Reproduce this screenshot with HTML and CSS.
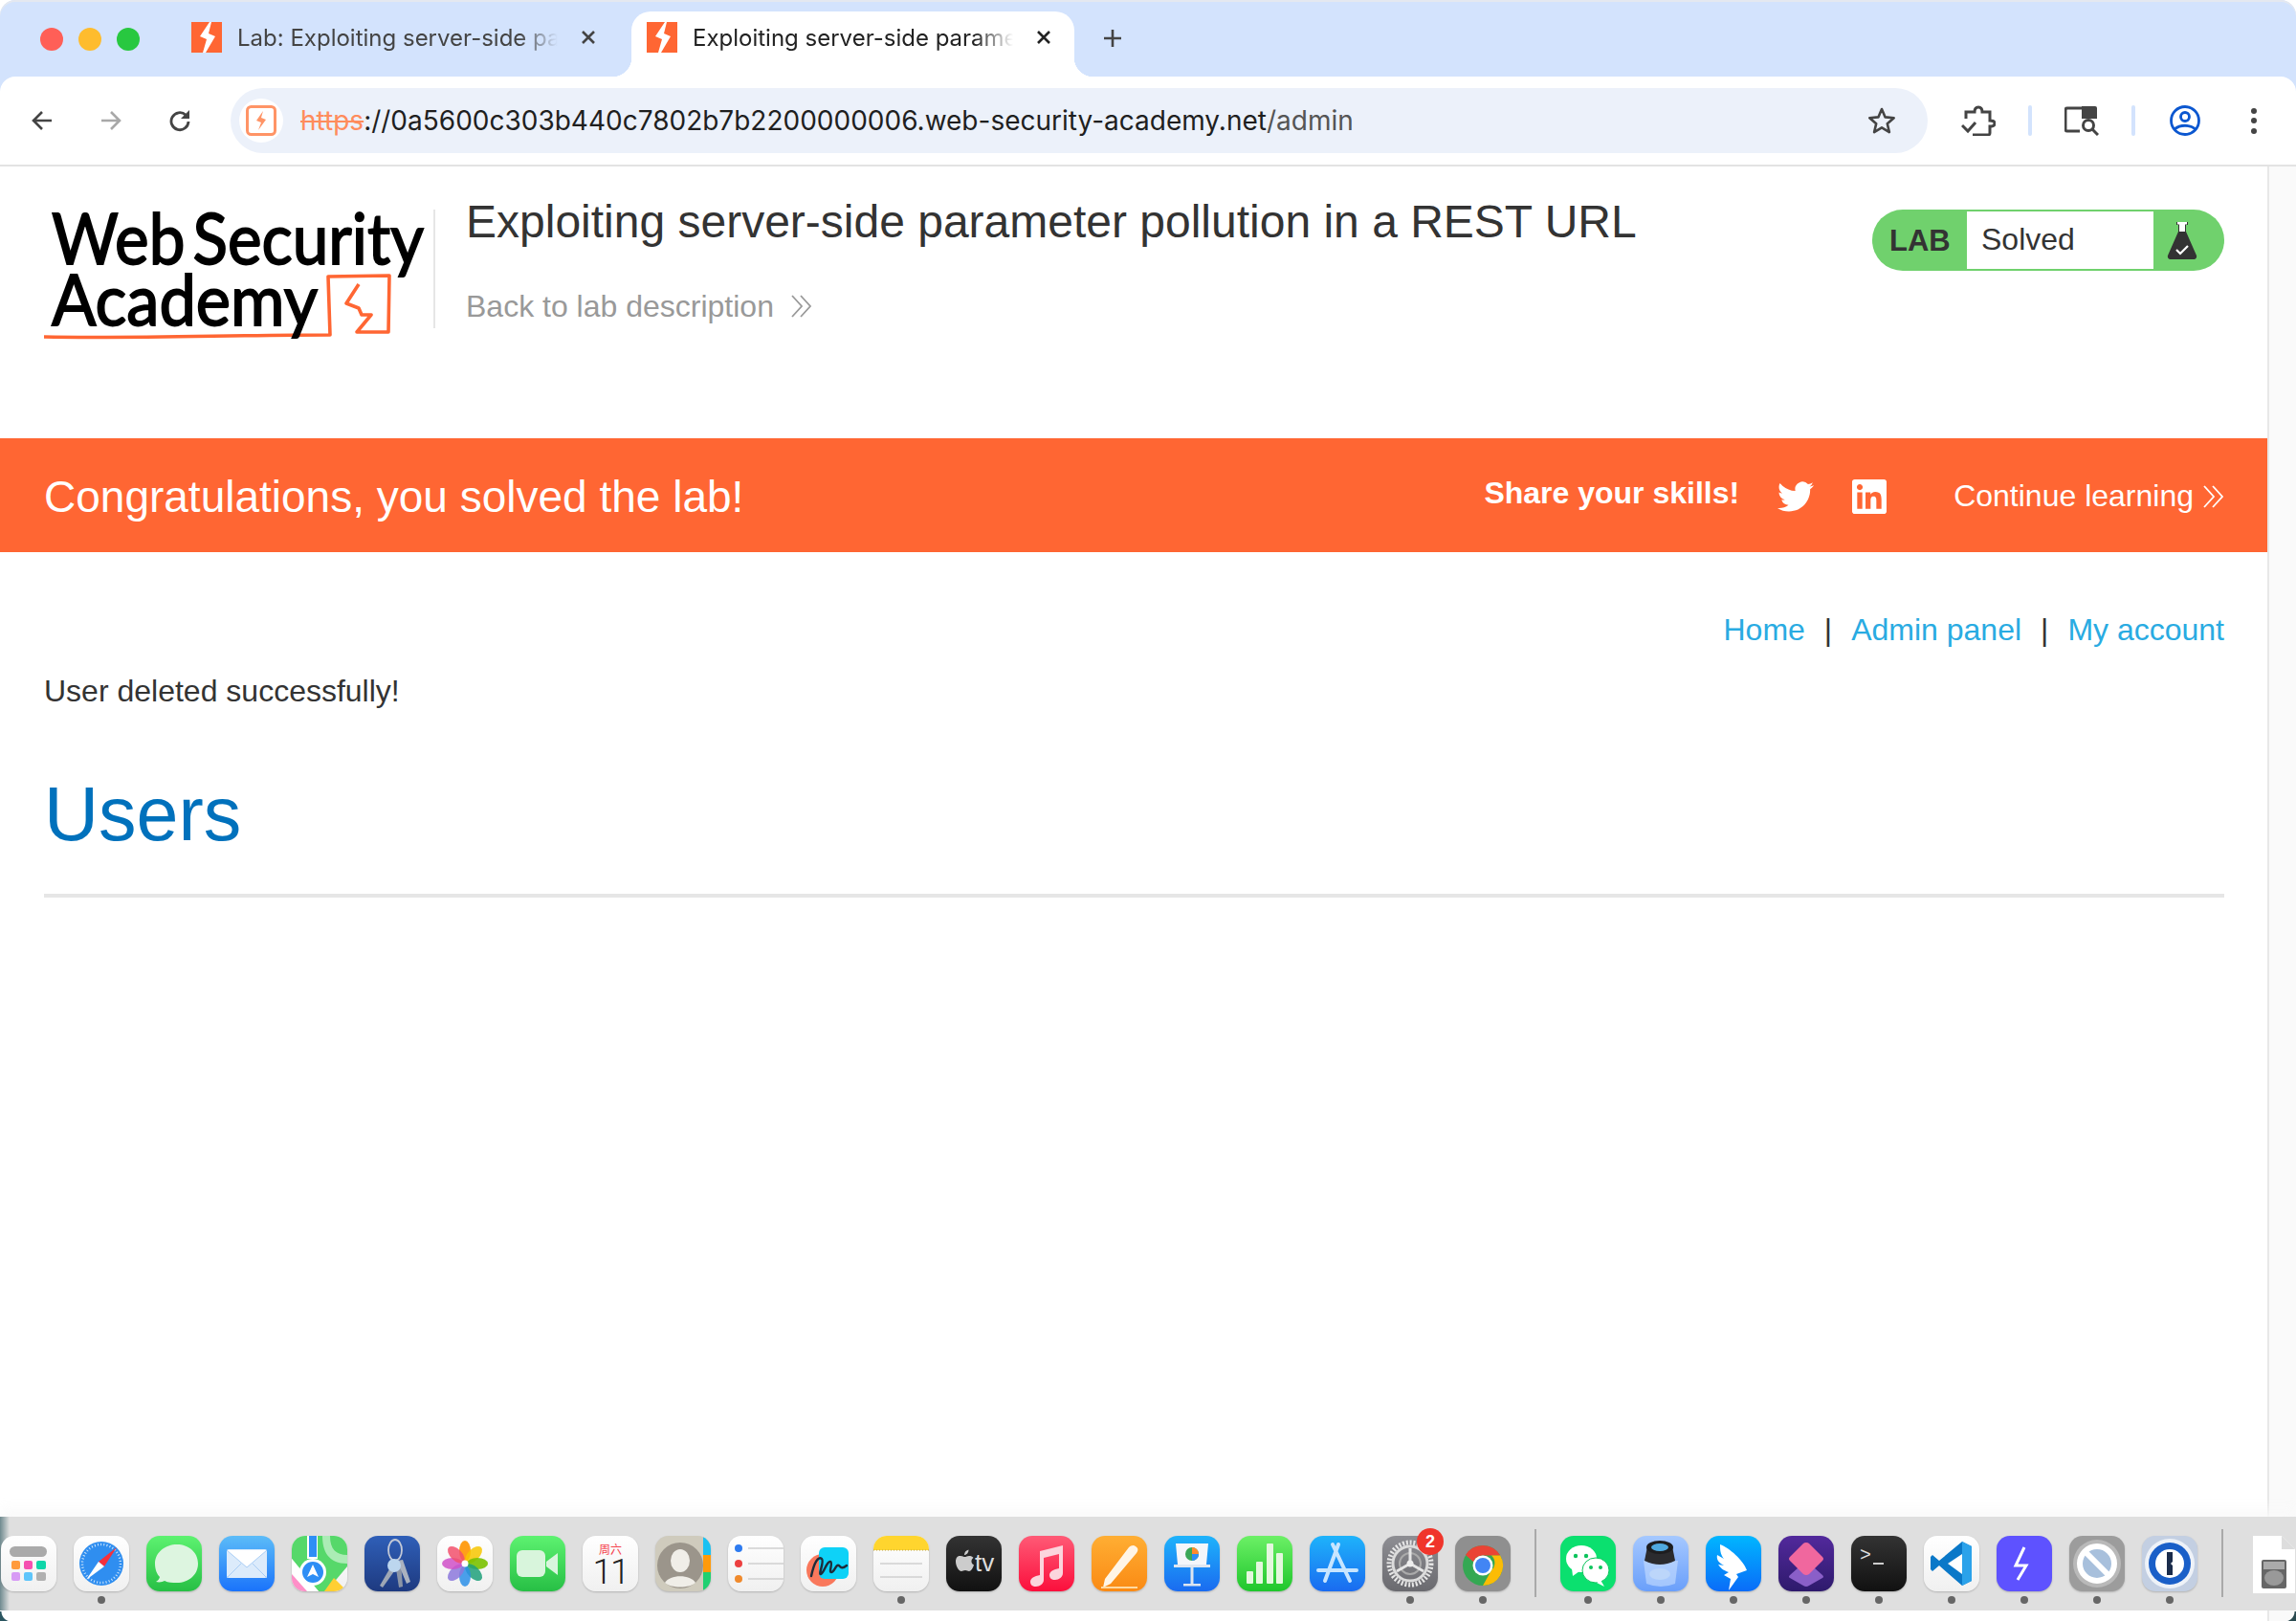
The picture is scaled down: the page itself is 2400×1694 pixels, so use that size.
FILE: index.html
```html
<!DOCTYPE html>
<html lang="en">
<head>
    <meta charset="UTF-8">
    <meta name="viewport" content="width=device-width, initial-scale=1.0">
    <title>Exploiting server-side parameter pollution in a REST URL</title>
    <link rel="stylesheet" href="styles.css">
</head>
<body>
<div class="window">

    <!-- tab strip -->
    <div class="tabstrip">
        <div class="lights">
            <span class="light light-red"></span>
            <span class="light light-yellow"></span>
            <span class="light light-green"></span>
        </div>
        <div class="tab">
            <svg class="favicon" viewBox="0 0 32 32"><rect width="32" height="32" fill="#ff6633"/><path d="M19 0 9 15l7 3-4 14h3l10-17-7-3 3-12z" fill="#fff"/></svg>
            <span class="tab-title">Lab: Exploiting server-side parameter pollution</span>
            <svg class="tab-close" viewBox="0 0 16 16"><path d="M2 2l12 12M14 2 2 14" stroke="#444" stroke-width="2.6"/></svg>
        </div>
        <div class="tab tab-active">
            <svg class="favicon" viewBox="0 0 32 32"><rect width="32" height="32" fill="#ff6633"/><path d="M19 0 9 15l7 3-4 14h3l10-17-7-3 3-12z" fill="#fff"/></svg>
            <span class="tab-title">Exploiting server-side parameter pollution</span>
            <svg class="tab-close" viewBox="0 0 16 16"><path d="M2 2l12 12M14 2 2 14" stroke="#222" stroke-width="2.6"/></svg>
        </div>
        <svg class="new-tab" viewBox="0 0 20 20"><path d="M10 1v18M1 10h18" stroke="#444" stroke-width="2.6"/></svg>
    </div>

    <!-- toolbar -->
    <div class="toolbar">
        <button class="nav-btn"><svg viewBox="0 0 24 24"><path d="M22 12H4M12 3l-9 9 9 9" fill="none" stroke="#444" stroke-width="2.6"/></svg></button>
        <button class="nav-btn"><svg viewBox="0 0 24 24"><path d="M2 12h18M12 3l9 9-9 9" fill="none" stroke="#a8a8a8" stroke-width="2.6"/></svg></button>
        <button class="nav-btn"><svg viewBox="0 0 24 24"><path d="M21 13a9 9 0 1 1-2.800-6.800L21 9" fill="none" stroke="#444" stroke-width="2.8"/><path d="M22 1v9h-9z" fill="#444"/></svg></button>
        <div class="omnibox">
            <span class="site-chip">
                <svg viewBox="0 0 32 32"><rect x="1.5" y="1.5" width="29" height="29" rx="4" fill="none" stroke="#ff9466" stroke-width="3"/><path d="M18 6l-7 10 5 2-3 8 8-11-5-2z" fill="#ff9466"/></svg>
            </span>
            <span class="url"><span class="url-scheme">https</span>://0a5600c303b440c7802b7b2200000006.web-security-academy.net<span class="url-path">/admin</span></span>
            <svg class="star" viewBox="0 0 30 30"><path d="M15 3l3.6 8.4 9.1.8-6.9 6 2.1 8.9L15 22.4l-7.9 4.7 2.1-8.9-6.9-6 9.1-.8z" fill="none" stroke="#444" stroke-width="2.6" stroke-linejoin="round"/></svg>
        </div>
        <svg class="tool-icon" viewBox="0 0 36 32"><path d="M5 14V7h9c0-3 1-5 4-5s4 2 4 5h8v9c3 0 5 1 5 3s-2 3-5 3v7a2 2 0 0 1-2 2H12" fill="none" stroke="#444" stroke-width="3"/><path d="M1 21l6 6L15 18" fill="none" stroke="#444" stroke-width="3"/></svg>
        <span class="tool-sep"></span>
        <svg class="tool-icon" viewBox="0 0 36 30"><path d="M20 2H3a2 2 0 0 0-2 2v20a2 2 0 0 0 2 2h13" fill="none" stroke="#444" stroke-width="3"/><path d="M18 0h14a2 2 0 0 1 2 2v11H18z" fill="#444"/><circle cx="25" cy="20" r="5.5" fill="none" stroke="#444" stroke-width="3"/><path d="M29 24l6 6" stroke="#444" stroke-width="3"/></svg>
        <span class="tool-sep"></span>
        <svg class="tool-icon tool-profile" viewBox="0 0 32 32"><circle cx="16" cy="16" r="14.5" fill="none" stroke="#0b57d0" stroke-width="2.8"/><circle cx="16" cy="12" r="4.5" fill="none" stroke="#0b57d0" stroke-width="2.8"/><path d="M5 25c6-5 16-5 22 0" fill="none" stroke="#0b57d0" stroke-width="2.8"/></svg>
        <svg class="tool-menu" viewBox="0 0 8 28"><circle cx="4" cy="4" r="3" fill="#444"/><circle cx="4" cy="14" r="3" fill="#444"/><circle cx="4" cy="25" r="3" fill="#444"/></svg>
    </div>

    <div class="viewport">
        <div class="page">

            <header class="lab-header">
                <svg class="logo" viewBox="0 0 407 140">
                    <path d="M0 133c90 2 200-2 299-2l-2-61 64-1-1 59h-33l15-18h-10l-3-7-13-5 13-20" fill="none" stroke="#ff6633" stroke-width="3.600" stroke-linejoin="round"/>
                    <text class="logo-text" x="8" y="57" textLength="389" lengthAdjust="spacingAndGlyphs">Web Security</text>
                    <text class="logo-text" x="8" y="121" textLength="278" lengthAdjust="spacingAndGlyphs">Academy</text>
                </svg>
                <span class="logo-divider"></span>
                <div class="lab-title">
                    <h2>Exploiting server-side parameter pollution in a REST URL</h2>
                    <a class="back-link" href="#">Back to lab description
                        <svg class="chevrons" viewBox="0 0 22 24"><path d="M1 1l10 11L1 23M10 1l10 11-10 11" fill="none" stroke="#999" stroke-width="1.8"/></svg>
                    </a>
                </div>
                <div class="lab-status">
                    <span class="lab-label">LAB</span>
                    <span class="lab-state">Solved</span>
                    <span class="lab-flask">
                        <svg viewBox="0 0 32 41"><path d="M10 1h12v3h-2v7l11 25c.6 2-.6 4-2.500 4h-25C1.600 40 .4 38 1 36l11-25V4h-2z" fill="#333"/><path d="M11 1h10v2.500h-2V11h-6V3.500h-2z" fill="#fff"/><path d="M10 30l4 4 8-8" fill="none" stroke="#fff" stroke-width="2.200"/></svg>
                    </span>
                </div>
            </header>

            <section class="solved-banner">
                <h4>Congratulations, you solved the lab!</h4>
                <strong class="share">Share your skills!</strong>
                <svg class="share-twitter" viewBox="0 0 24 24"><path fill="#fff" d="M23.953 4.57a10 10 0 01-2.825.775 4.958 4.958 0 002.163-2.723c-.951.555-2.005.959-3.127 1.184a4.92 4.92 0 00-8.384 4.482C7.69 8.095 4.067 6.13 1.64 3.162a4.822 4.822 0 00-.666 2.475c0 1.71.87 3.213 2.188 4.096a4.904 4.904 0 01-2.228-.616v.06a4.923 4.923 0 003.946 4.827 4.996 4.996 0 01-2.212.085 4.936 4.936 0 004.604 3.417 9.867 9.867 0 01-6.102 2.105c-.39 0-.779-.023-1.17-.067a13.995 13.995 0 007.557 2.209c9.053 0 13.998-7.496 13.998-13.985 0-.21 0-.42-.015-.63A9.935 9.935 0 0024 4.59z"/></svg>
                <svg class="share-linkedin" viewBox="0 0 24 24"><path fill="#fff" d="M20.447 20.452h-3.554v-5.569c0-1.328-.027-3.037-1.852-3.037-1.853 0-2.136 1.445-2.136 2.939v5.667H9.351V9h3.414v1.561h.046c.477-.9 1.637-1.85 3.37-1.85 3.601 0 4.267 2.37 4.267 5.455v6.286zM5.337 7.433c-1.144 0-2.063-.926-2.063-2.065 0-1.138.92-2.063 2.063-2.063 1.14 0 2.064.925 2.064 2.063 0 1.139-.925 2.065-2.064 2.065zm1.782 13.019H3.555V9h3.564v11.452zM22.225 0H1.771C.792 0 0 .774 0 1.729v20.542C0 23.227.792 24 1.771 24h20.451C23.2 24 24 23.227 24 22.271V1.729C24 .774 23.2 0 22.222 0h.003z"/></svg>
                <a class="continue" href="#">Continue learning
                    <svg class="chevrons" viewBox="0 0 22 24"><path d="M1 1l10 11L1 23M10 1l10 11-10 11" fill="none" stroke="#fff" stroke-width="1.8"/></svg>
                </a>
            </section>

            <main class="content">
                <nav class="top-links">
                    <a href="#">Home</a><span>|</span><a href="#">Admin panel</a><span>|</span><a href="#">My account</a>
                </nav>
                <p class="message">User deleted successfully!</p>
                <h1>Users</h1>
                <hr class="rule">
            </main>
        </div>
        <div class="scrollbar"></div>
    </div>

    <!-- dock sits over the bottom of the page -->
    <div class="dock">
        <div class="app"><div class="tile t-white"><svg viewBox="0 0 58 58"><rect x="9" y="11" width="39" height="11" rx="5.500" fill="#aaa"/><rect x="11" y="26" width="9" height="9" rx="2" fill="#ff9b3d"/><rect x="24" y="26" width="9" height="9" rx="2" fill="#f550b0"/><rect x="37" y="26" width="10" height="9" rx="2" fill="#0fd6a9"/><rect x="11" y="38" width="9" height="9" rx="2" fill="#d79bf5"/><rect x="24" y="38" width="9" height="9" rx="2" fill="#5ec5fb"/><rect x="37" y="38" width="10" height="9" rx="2" fill="#b0b0b0"/></svg></div></div>
        <div class="app has-dot"><div class="tile t-white"><svg viewBox="0 0 58 58"><circle cx="29" cy="29" r="23" fill="#2f8ef0"/><circle cx="29" cy="29" r="20" fill="none" stroke="#cfe6fb" stroke-width="2.500" stroke-dasharray="1 2.200"/><path d="M45 12 26 27l6 5z" fill="#f5303c"/><path d="M13 46l19-14-6-5z" fill="#fff"/></svg></div></div>
        <div class="app"><div class="tile t-messages"><svg viewBox="0 0 58 58"><path d="M34 9c-12 0-23 8-23 20 0 6 2 11 5 14-.5 2-2 4-4 5 4 1 7 0 9-1 4 2 8 2 13 2 12 0 22-8 22-20S46 9 34 9z" transform="translate(-2 0)" fill="#ddf5e0"/></svg></div></div>
        <div class="app"><div class="tile t-mail"><svg viewBox="0 0 58 58"><rect x="8" y="14" width="42" height="30" rx="2" fill="#dcebfb"/><path d="M8 15l21 18 21-18" fill="#fff" stroke="#a9cdf5" stroke-width="1"/><path d="M8 44l15-15M50 44 35 29" stroke="#a9cdf5" stroke-width="1"/></svg></div></div>
        <div class="app"><div class="tile t-white"><svg viewBox="0 0 58 58"><path d="M0 0h58v32L36 58H28L0 24z" fill="#56d86a"/><path d="M0 24l28 34H16L0 40z" fill="#fff"/><path d="M0 40l16 18H6q-6 0-6-6z" fill="#ff8fc8"/><path d="M34 58l10-14 14 14z" fill="#ffcf33"/><path d="M40 0c0 14 6 20 18 20v9C38 29 32 16 32 0z" fill="#fff" opacity=".5"/><rect x="16" y="0" width="11" height="24" fill="#fff"/><rect x="18" y="0" width="8" height="22" fill="#2e8ef5"/><circle cx="22" cy="38" r="14" fill="#fff"/><circle cx="22" cy="38" r="11" fill="#2e8ef5"/><path d="M22 30l6 13-6-3-6 3z" fill="#fff"/></svg></div></div>
        <div class="app"><div class="tile t-keychain"><svg viewBox="0 0 58 58"><ellipse cx="32" cy="15" rx="7" ry="11" fill="none" stroke="#c3c9d6" stroke-width="1.800"/><path d="M30 28 16 52l3 2 17-24z" fill="#9ea7b5"/><path d="M32 28l4 26 4-1-2-25z" fill="#8b95a6"/><path d="M34 26l10 24 4-2-8-23z" fill="#aab2bf"/><circle cx="31" cy="31" r="7" fill="#bcd6ee"/></svg></div></div>
        <div class="app"><div class="tile t-white"><svg viewBox="0 0 58 58">
            <ellipse cx="29" cy="16" rx="6" ry="11" fill="#ff9500" opacity=".9"/>
            <ellipse cx="29" cy="16" rx="6" ry="11" fill="#f7c600" opacity=".85" transform="rotate(45 29 29)"/>
            <ellipse cx="29" cy="16" rx="6" ry="11" fill="#7ac100" opacity=".9" transform="rotate(90 29 29)"/>
            <ellipse cx="29" cy="16" rx="6" ry="11" fill="#1fa07a" opacity=".85" transform="rotate(135 29 29)"/>
            <ellipse cx="29" cy="16" rx="6" ry="11" fill="#2c8fe8" opacity=".85" transform="rotate(180 29 29)"/>
            <ellipse cx="29" cy="16" rx="6" ry="11" fill="#8c78dc" opacity=".85" transform="rotate(225 29 29)"/>
            <ellipse cx="29" cy="16" rx="6" ry="11" fill="#d050c8" opacity=".85" transform="rotate(270 29 29)"/>
            <ellipse cx="29" cy="16" rx="6" ry="11" fill="#f2506c" opacity=".85" transform="rotate(315 29 29)"/>
            <circle cx="29" cy="29" r="3.500" fill="#fff"/></svg></div></div>
        <div class="app"><div class="tile t-messages"><svg viewBox="0 0 58 58"><rect x="7" y="15" width="30" height="28" rx="6" fill="#d8f5dc"/><path d="M38 27l12-9v23l-12-9z" fill="#d8f5dc"/></svg></div></div>
        <div class="app"><div class="tile t-white t-calendar"><span class="cal-day">周六</span><span class="cal-date">11</span></div></div>
        <div class="app"><div class="tile t-contacts"><svg viewBox="0 0 58 58"><rect x="50" y="0" width="8" height="20" fill="#19c1f2"/><rect x="50" y="20" width="8" height="18" fill="#ff9a0a"/><rect x="50" y="38" width="8" height="20" fill="#1fd071"/><circle cx="26" cy="31" r="24" fill="#9b958b"/><ellipse cx="26" cy="26" rx="10" ry="12" fill="#f0eee8"/><path d="M10 49c5-9 27-9 32 0-6 6-26 6-32 0z" fill="#f0eee8"/></svg></div></div>
        <div class="app"><div class="tile t-white"><svg viewBox="0 0 58 58"><circle cx="11" cy="13" r="4" fill="#2e7bf0"/><circle cx="11" cy="29" r="4" fill="#ec4040"/><circle cx="11" cy="45" r="4" fill="#f08a2c"/><path d="M21 13h37M21 29h37M21 45h37" stroke="#cfcfcf" stroke-width="1.500"/></svg></div></div>
        <div class="app"><div class="tile t-white"><svg viewBox="0 0 58 58"><circle cx="23" cy="36" r="17" fill="#f9785c"/><rect x="19" y="12" width="31" height="33" rx="6" fill="#0ed2f7"/><path d="M11 42c3-14 7-21 11-18 3 3-4 17-1 16 4-2 6-14 10-13 3 1-2 11 1 11 3 0 5-9 8-7 2 2 3 4 8 0" fill="none" stroke="#1f2c3a" stroke-width="2.400" stroke-linecap="round"/></svg></div></div>
        <div class="app has-dot"><div class="tile t-white"><svg viewBox="0 0 58 58"><path d="M0 0h58v15H0z" fill="#ffd52e"/><path d="M0 15h58" stroke="#b9a04a" stroke-width="1" stroke-dasharray="1 2"/><path d="M7 29h44M7 43h44" stroke="#cfcfcf" stroke-width="1.500"/></svg></div></div>
        <div class="app"><div class="tile t-tv"><svg viewBox="0 0 58 58"><path d="M14 21c3-.5 4 1 5.500 1s3-1.500 5.500-1c1.500.2 2.800 1 3.500 2-3 2-2.500 6 .5 7.500-1 3-3 6.500-5 6.500-1.500 0-2-1-4-1s-2.500 1-4 1c-3 0-6-6-6-10 0-4 2-6 4-6zM19 20c0-3 2-5 4.500-5.500 0 3-2 5.500-4.500 5.500z" fill="#ccc"/><text class="tv-text" x="30" y="37">tv</text></svg></div></div>
        <div class="app"><div class="tile t-music"><svg viewBox="0 0 58 58"><path d="M22 16l24-6v29c0 4-4 7-8 7s-6-2-6-5 3-5 6-6l4-1V19l-16 4v23c0 4-4 7-8 7s-6-2-6-5 3-5 6-6l4-1z" fill="#fbd5dd"/></svg></div></div>
        <div class="app"><div class="tile t-pages"><svg viewBox="0 0 58 58"><path d="M46 11c3 2 3 4 1 7L20 50l-8 4 2-9 25-33c2-2 5-3 7-1z" fill="#fff5e6"/><path d="M10 54h38" stroke="#ffd9a0" stroke-width="2"/></svg></div></div>
        <div class="app"><div class="tile t-blue"><svg viewBox="0 0 58 58"><path d="M12 8h34l-2 22H14z" fill="#f4f6fa"/><path d="M10 30h38v3H10z" fill="#dfe6f0"/><circle cx="29" cy="19" r="7" fill="#3aa757"/><path d="M29 19V12a7 7 0 0 1 7 7z" fill="#ff8a2c"/><path d="M29 19h7a7 7 0 0 1-7 7z" fill="#2e8ef5"/><path d="M27.500 33h3v17h-3z" fill="#dde5f0"/><path d="M20 50h18v2.500H20z" fill="#dde5f0"/></svg></div></div>
        <div class="app"><div class="tile t-numbers"><svg viewBox="0 0 58 58"><rect x="10" y="37" width="7" height="13" rx="1" fill="#e4f7de"/><rect x="20" y="27" width="7" height="23" rx="1" fill="#e4f7de"/><rect x="31" y="8" width="7" height="42" rx="1" fill="#e4f7de"/><rect x="41" y="18" width="7" height="32" rx="1" fill="#e4f7de"/></svg></div></div>
        <div class="app"><div class="tile t-blue"><svg viewBox="0 0 58 58"><path d="M30 9 16 47M24 9l18 38M9 36h40" fill="none" stroke="#c7e5ff" stroke-width="4" stroke-linecap="round"/></svg></div></div>
        <div class="app has-dot"><div class="tile t-settings"><svg viewBox="0 0 58 58"><circle cx="29" cy="29" r="22" fill="none" stroke="#e6e6e6" stroke-width="5" stroke-dasharray="2 1.800"/><circle cx="29" cy="29" r="18" fill="none" stroke="#dcdcdc" stroke-width="3"/><circle cx="29" cy="29" r="11" fill="none" stroke="#aaa" stroke-width="2"/><path d="M29 29V13M29 29 15 37M29 29l14 8" stroke="#e6e6e6" stroke-width="3"/><circle cx="29" cy="29" r="3.500" fill="#eee"/></svg></div><span class="badge">2</span></div>
        <div class="app has-dot"><div class="tile t-chrome"><svg viewBox="0 0 58 58"><circle cx="29" cy="31" r="21" fill="#34a853"/><path d="M29 10a21 21 0 0 1 18.200 10.500H29a10.500 10.500 0 0 0-9.800 6.700L11 20a21 21 0 0 1 18-10z" fill="#ea4335"/><path d="M47.200 20.500A21 21 0 0 1 29 52l9-16a10.500 10.500 0 0 0 0-15.500z" fill="#fbbc05"/><circle cx="29" cy="31" r="10.500" fill="#fff"/><circle cx="29" cy="31" r="8" fill="#4285f4"/></svg></div></div>
        <span class="dock-sep"></span>
        <div class="app has-dot"><div class="tile t-wechat"><svg viewBox="0 0 58 58"><ellipse cx="22" cy="24" rx="16" ry="14" fill="#fff"/><path d="M12 34l1 8 7-5z" fill="#fff"/><circle cx="16" cy="21" r="2.200" fill="#0cc45c"/><circle cx="27" cy="21" r="2.200" fill="#0cc45c"/><ellipse cx="37" cy="36" rx="14" ry="13" fill="#fff" stroke="#0cc45c" stroke-width="1"/><path d="M42 46l4 7-8-4z" fill="#fff"/><circle cx="32" cy="33" r="2" fill="#0cc45c"/><circle cx="42" cy="33" r="2" fill="#0cc45c"/></svg></div></div>
        <div class="app has-dot"><div class="tile t-preview"><svg viewBox="0 0 58 58"><path d="M11 26h36l-3 24q-15 6-30 0z" fill="#cfe3ff" opacity=".55"/><ellipse cx="28" cy="40" rx="11" ry="6" fill="#bcd6fa"/><path d="M15 11h26l3 15q-16 8-32 0z" fill="#2b2b2e"/><ellipse cx="28" cy="12" rx="14" ry="7" fill="#1d1d1f"/><ellipse cx="28" cy="12" rx="9" ry="4" fill="#4fa9e0"/></svg></div></div>
        <div class="app has-dot"><div class="tile t-wing"><svg viewBox="0 0 58 58"><path d="M15 9c10 4 24 16 28 27l-11 4 2 3-10 14 2-12-7-4 5-3c-6-2-9-5-11-8l6 1C13 28 11 24 12 20l7 4C15 19 15 14 15 9z" fill="#fff"/></svg></div></div>
        <div class="app has-dot"><div class="tile t-shortcuts"><svg viewBox="0 0 58 58"><path d="M29 26l17 15q2 2 0 3L32 52q-3 2-6 0L12 44q-2-1 0-3z" fill="#8a5fc8"/><path d="M29 7q2 0 3 1l14 14q2 2 0 4L32 40q-3 2-6 0L12 26q-2-2 0-4L26 8q1-1 3-1z" fill="#f0679e"/></svg></div></div>
        <div class="app has-dot"><div class="tile t-terminal"><svg viewBox="0 0 58 58"><text class="term-text" x="9" y="26">&gt;</text><path d="M23 29h11" stroke="#ccc" stroke-width="2"/></svg></div></div>
        <div class="app has-dot"><div class="tile t-white"><svg viewBox="0 0 58 58"><path d="M40 6l10 5v36l-10 5-24-21-7 6-2-2V22l2-2 7 6z" fill="#0a78c8"/><path d="M40 19 25 29l15 11z" fill="#fff"/><path d="M40 6l10 5v36l-10 5z" fill="#2ba2ea"/></svg></div></div>
        <div class="app has-dot"><div class="tile t-bolt"><svg viewBox="0 0 58 58"><path d="M29 12l-9 19h11l-9 15" fill="none" stroke="#fff" stroke-width="3"/></svg></div></div>
        <div class="app has-dot"><div class="tile t-gray"><svg viewBox="0 0 58 58"><circle cx="29" cy="29" r="25" fill="#b9b9b9"/><circle cx="29" cy="29" r="18" fill="#a8c0dc" stroke="#fff" stroke-width="6"/><path d="M17 17l24 24" stroke="#fff" stroke-width="6"/></svg></div></div>
        <div class="app has-dot"><div class="tile t-onepass"><svg viewBox="0 0 58 58"><circle cx="29" cy="29" r="26" fill="#eef2f8"/><circle cx="29" cy="29" r="22" fill="#1a5fc8"/><circle cx="29" cy="29" r="15" fill="#fff"/><path d="M26 17h6v10l-2 2 2 2v10h-6V30z" fill="#1a2c4c"/></svg></div></div>
        <span class="dock-sep"></span>
        <div class="app app-file"><svg viewBox="0 0 44 60"><path d="M0 0h30l14 14v46H0z" fill="#fff"/><path d="M30 0l14 14H30z" fill="#ddd"/><rect x="9" y="25" width="26" height="30" rx="2" fill="#666"/><rect x="11" y="27" width="22" height="8" fill="#aaa"/><ellipse cx="22" cy="44" rx="10" ry="8" fill="#999"/></svg></div>
    </div>
    <div class="corner corner-left"></div>
    <div class="corner corner-right"></div>
</div>
</body>
</html>
```
FILE: styles.css
```css
* {
    padding: 0;
    margin: 0;
    box-sizing: border-box;
}
body {
    width: 2400px;
    height: 1694px;
    overflow: hidden;
    background: #fff;
    font-family: "Liberation Sans", Arial, sans-serif;
    color: #333;
}
a {
    text-decoration: none;
    color: inherit;
}
.window {
    position: relative;
    display: flex;
    flex-direction: column;
    height: 1694px;
    overflow: hidden;
    background: #d3e3fd;
    border-radius: 16px 16px 0 0;
    box-shadow: inset 0 2px 0 #e4e8f0;
}

/* ---------- tabs ---------- */
.tabstrip {
    display: flex;
    align-items: flex-end;
    height: 80px;
}
.lights {
    display: flex;
    align-self: center;
    gap: 16px;
    width: 184px;
    padding-left: 42px;
    margin-top: 2px;
}
.light {
    width: 24px;
    height: 24px;
    border-radius: 50%;
}
.light-red { background: #ff5f57; }
.light-yellow { background: #febc2e; }
.light-green { background: #28c840; }
.tab {
    position: relative;
    display: flex;
    align-items: center;
    width: 463px;
    height: 68px;
    padding: 0 24px 14px 16px;
    margin-right: 13px;
    font-family: Inter, "Liberation Sans", sans-serif;
    font-size: 24px;
    color: #444;
}
.tab-active {
    background: #fff;
    border-radius: 20px 20px 0 0;
    color: #222;
}
.tab-active::before,
.tab-active::after {
    content: "";
    position: absolute;
    bottom: 0;
    width: 20px;
    height: 20px;
}
.tab-active::before {
    left: -20px;
    background: radial-gradient(circle at 0 0, transparent 20px, #fff 20.5px);
}
.tab-active::after {
    right: -20px;
    background: radial-gradient(circle at 100% 0, transparent 20px, #fff 20.5px);
}
.favicon {
    flex: none;
    width: 32px;
    height: 32px;
    margin-right: 16px;
}
.tab-title {
    flex: 1;
    overflow: hidden;
    white-space: nowrap;
    -webkit-mask-image: linear-gradient(to right, #000 88%, transparent);
    mask-image: linear-gradient(to right, #000 88%, transparent);
}
.tab-close {
    flex: none;
    width: 16px;
    height: 16px;
    margin-left: 24px;
}
.new-tab {
    width: 20px;
    height: 20px;
    margin: 0 0 30px 17px;
}

/* ---------- toolbar ---------- */
.toolbar {
    display: flex;
    align-items: center;
    height: 94px;
    padding-left: 20px;
    background: #fff;
    border-bottom: 2px solid #e3e3e3;
    border-radius: 16px 16px 0 0;
}
.nav-btn {
    width: 48px;
    height: 48px;
    margin-right: 24px;
    padding: 12px;
    border: 0;
    background: none;
}
.nav-btn svg {
    display: block;
    width: 24px;
    height: 24px;
}
.omnibox {
    display: flex;
    align-items: center;
    width: 1774px;
    height: 68px;
    margin-left: 5px;
    padding: 0 33px 0 9px;
    background: #ecf1fa;
    border-radius: 34px;
}
.site-chip {
    display: flex;
    align-items: center;
    justify-content: center;
    flex: none;
    width: 46px;
    height: 46px;
    background: #fff;
    border-radius: 50%;
}
.site-chip svg {
    width: 32px;
    height: 32px;
}
.url {
    flex: 1;
    margin-left: 18px;
    font-family: Inter, "Liberation Sans", sans-serif;
    font-size: 28px;
    color: #1f1f1f;
    white-space: nowrap;
}
.url-scheme {
    color: #ff8c5c;
    text-decoration: line-through;
}
.url-path {
    color: #555;
}
.star {
    flex: none;
    width: 30px;
    height: 30px;
}
.tool-icon {
    flex: none;
    width: 36px;
    height: 32px;
    margin-left: 35px;
}
.tool-sep {
    flex: none;
    width: 4px;
    height: 32px;
    margin-left: 34px;
    background: #d3e3fd;
    border-radius: 2px;
}
.tool-sep + .tool-icon {
    margin-left: 34px;
}
.tool-sep + .tool-profile {
    width: 32px;
    margin-left: 36px;
}
.tool-menu {
    flex: none;
    width: 8px;
    height: 28px;
    margin-left: 52px;
}

/* ---------- page ---------- */
.viewport {
    display: flex;
    flex: 1;
}
.page {
    flex: 1;
    min-width: 0;
    background: #fff;
}
.scrollbar {
    flex: none;
    width: 30px;
    background: #fafafa;
    border-left: 2px solid #e8e8e8;
}
.lab-header {
    display: flex;
    align-items: flex-start;
    height: 284px;
    padding: 30px 45px 0 46px;
}
.logo {
    flex: none;
    width: 407px;
    height: 140px;
    margin-top: 15px;
    overflow: visible;
}
.logo-text {
    font-family: Lato, "Open Sans", sans-serif;
    font-size: 74px;
    word-spacing: -10px;
    fill: #000;
    stroke: #000;
    stroke-width: 1.8px;
}
.logo-divider {
    flex: none;
    width: 2px;
    height: 124px;
    margin-top: 15px;
    background: #e6e6e6;
}
.lab-title {
    flex: 1;
    margin-left: 32px;
}
.lab-title h2 {
    font-size: 48px;
    font-weight: 400;
    line-height: 56px;
    color: #333;
}
.back-link {
    display: flex;
    align-items: center;
    margin-top: 42px;
    font-size: 32px;
    line-height: 36px;
    color: #999;
}
.chevrons {
    flex: none;
    width: 22px;
    height: 24px;
    margin-left: 18px;
}
.lab-status {
    display: flex;
    flex: none;
    width: 368px;
    height: 64px;
    margin-top: 15px;
    padding: 2px 0;
    background: #70d16d;
    border-radius: 32px;
    font-size: 32px;
}
.lab-label {
    width: 99px;
    padding-left: 18px;
    font-size: 31px;
    font-weight: 700;
    line-height: 62px;
}
.lab-state {
    flex: 1;
    padding-left: 15px;
    background: #fff;
    line-height: 58px;
}
.lab-flask {
    display: flex;
    align-items: center;
    width: 74px;
    padding-left: 14px;
}
.lab-flask svg {
    width: 32px;
    height: 41px;
}
.solved-banner {
    display: flex;
    align-items: center;
    height: 119px;
    padding: 2px 45px 0 46px;
    background: #ff6633;
    color: #fff;
}
.solved-banner h4 {
    flex: 1;
    font-size: 46px;
    font-weight: 400;
}
.share {
    font-size: 32px;
    margin-bottom: 6px;
}
.share-twitter {
    width: 38px;
    height: 38px;
    margin-left: 40px;
}
.share-linkedin {
    width: 36px;
    height: 36px;
    margin-left: 40px;
}
.continue {
    display: flex;
    align-items: center;
    margin-left: 70px;
    font-size: 32px;
}
.continue .chevrons {
    margin-left: 10px;
}
.content {
    padding: 61px 45px 0 46px;
}
.top-links {
    display: flex;
    justify-content: flex-end;
    gap: 20px;
    font-size: 32px;
    line-height: 40px;
}
.top-links a {
    color: #29abe2;
}
.message {
    margin-top: 24px;
    font-size: 32px;
    line-height: 40px;
}
.content h1 {
    margin-top: 63px;
    font-size: 79px;
    font-weight: 400;
    line-height: 92px;
    color: #0071bc;
}
.rule {
    height: 4px;
    margin-top: 37px;
    border: 0;
    background: #e6e6e6;
}

/* ---------- dock ---------- */
.dock {
    position: absolute;
    left: 0;
    right: 0;
    bottom: 11px;
    display: flex;
    gap: 18px;
    height: 98px;
    padding: 20px 0 0 1px;
    background: linear-gradient(to right, #6f8a8f 0, #dfdfdf 10px);
    box-shadow: 0 -8px 12px rgba(250, 250, 250, .9);
    overflow: hidden;
}
.app {
    position: relative;
    flex: none;
    width: 58px;
}
.has-dot::after {
    content: "";
    display: block;
    width: 8px;
    height: 8px;
    margin: 5px auto 0;
    background: #666;
    border-radius: 50%;
}
.tile {
    width: 58px;
    height: 58px;
    overflow: hidden;
    border-radius: 14px;
    box-shadow: 0 1px 2px rgba(0, 0, 0, .2);
}
.tile svg {
    display: block;
    width: 58px;
    height: 58px;
}
.dock-sep {
    flex: none;
    width: 2px;
    height: 71px;
    margin: -7px 7px 0;
    background: #a9a9a9;
}
.app-file {
    width: 44px;
    margin-left: 6px;
}
.app-file svg {
    display: block;
    width: 44px;
    height: 60px;
}
.badge {
    position: absolute;
    top: -8px;
    right: -6px;
    width: 28px;
    height: 28px;
    background: #f0352b;
    border-radius: 50%;
    font-size: 18px;
    font-weight: 700;
    line-height: 28px;
    text-align: center;
    color: #fff;
}
.t-white { background: linear-gradient(#fff, #f0f0f0); }
.t-messages { background: linear-gradient(#5df270, #27bf45); }
.t-mail { background: linear-gradient(#5cbcf8, #1a73fb); }
.t-keychain { background: linear-gradient(#2f5fb8, #1e3a80); }
.t-contacts { background: #cfcbbd; }
.t-tv { background: linear-gradient(#333, #111); }
.t-music { background: linear-gradient(#ff5a76, #fb0f3c); }
.t-pages { background: linear-gradient(#ffae33, #fa8a14); }
.t-blue { background: linear-gradient(#1eb3fb, #1a6bf0); }
.t-numbers { background: linear-gradient(#6cf066, #1fc62c); }
.t-settings { background: linear-gradient(#8e8e93, #6a6a6f); }
.t-chrome { background: #8f8f8f; }
.t-wechat { background: #0be06f; }
.t-preview { background: linear-gradient(#a5c8ff, #6a9ffa); }
.t-wing { background: linear-gradient(#00b6ff, #0a6cf8); }
.t-shortcuts { background: linear-gradient(#52299c, #2e1a6c); }
.t-terminal { background: linear-gradient(#333, #111); }
.t-bolt { background: #5e52ff; }
.t-gray { background: #9c9c9c; }
.t-onepass { background: #c3cfe2; }
.t-calendar {
    display: flex;
    flex-direction: column;
    align-items: center;
}
.cal-day {
    margin-top: 7px;
    font-family: "Noto Sans CJK SC", sans-serif;
    font-size: 12px;
    line-height: 13px;
    color: #f5434e;
}
.cal-date {
    font-family: Roboto, "Liberation Sans", sans-serif;
    font-size: 37px;
    font-weight: 300;
    letter-spacing: -2px;
    line-height: 36px;
    color: #222;
}
.tv-text {
    font-family: "Liberation Sans", sans-serif;
    font-size: 26px;
    fill: #ddd;
}
.term-text {
    font-family: "Liberation Mono", monospace;
    font-size: 20px;
    fill: #ddd;
}
.corner {
    position: absolute;
    bottom: 0;
    width: 12px;
    height: 10px;
}
.corner-left {
    left: 0;
    background: radial-gradient(circle at 100% 0, transparent 10px, #2a5560 11px);
}
.corner-right {
    right: 0;
    background: radial-gradient(circle at 0 0, transparent 10px, #2a4a50 11px);
}
```
